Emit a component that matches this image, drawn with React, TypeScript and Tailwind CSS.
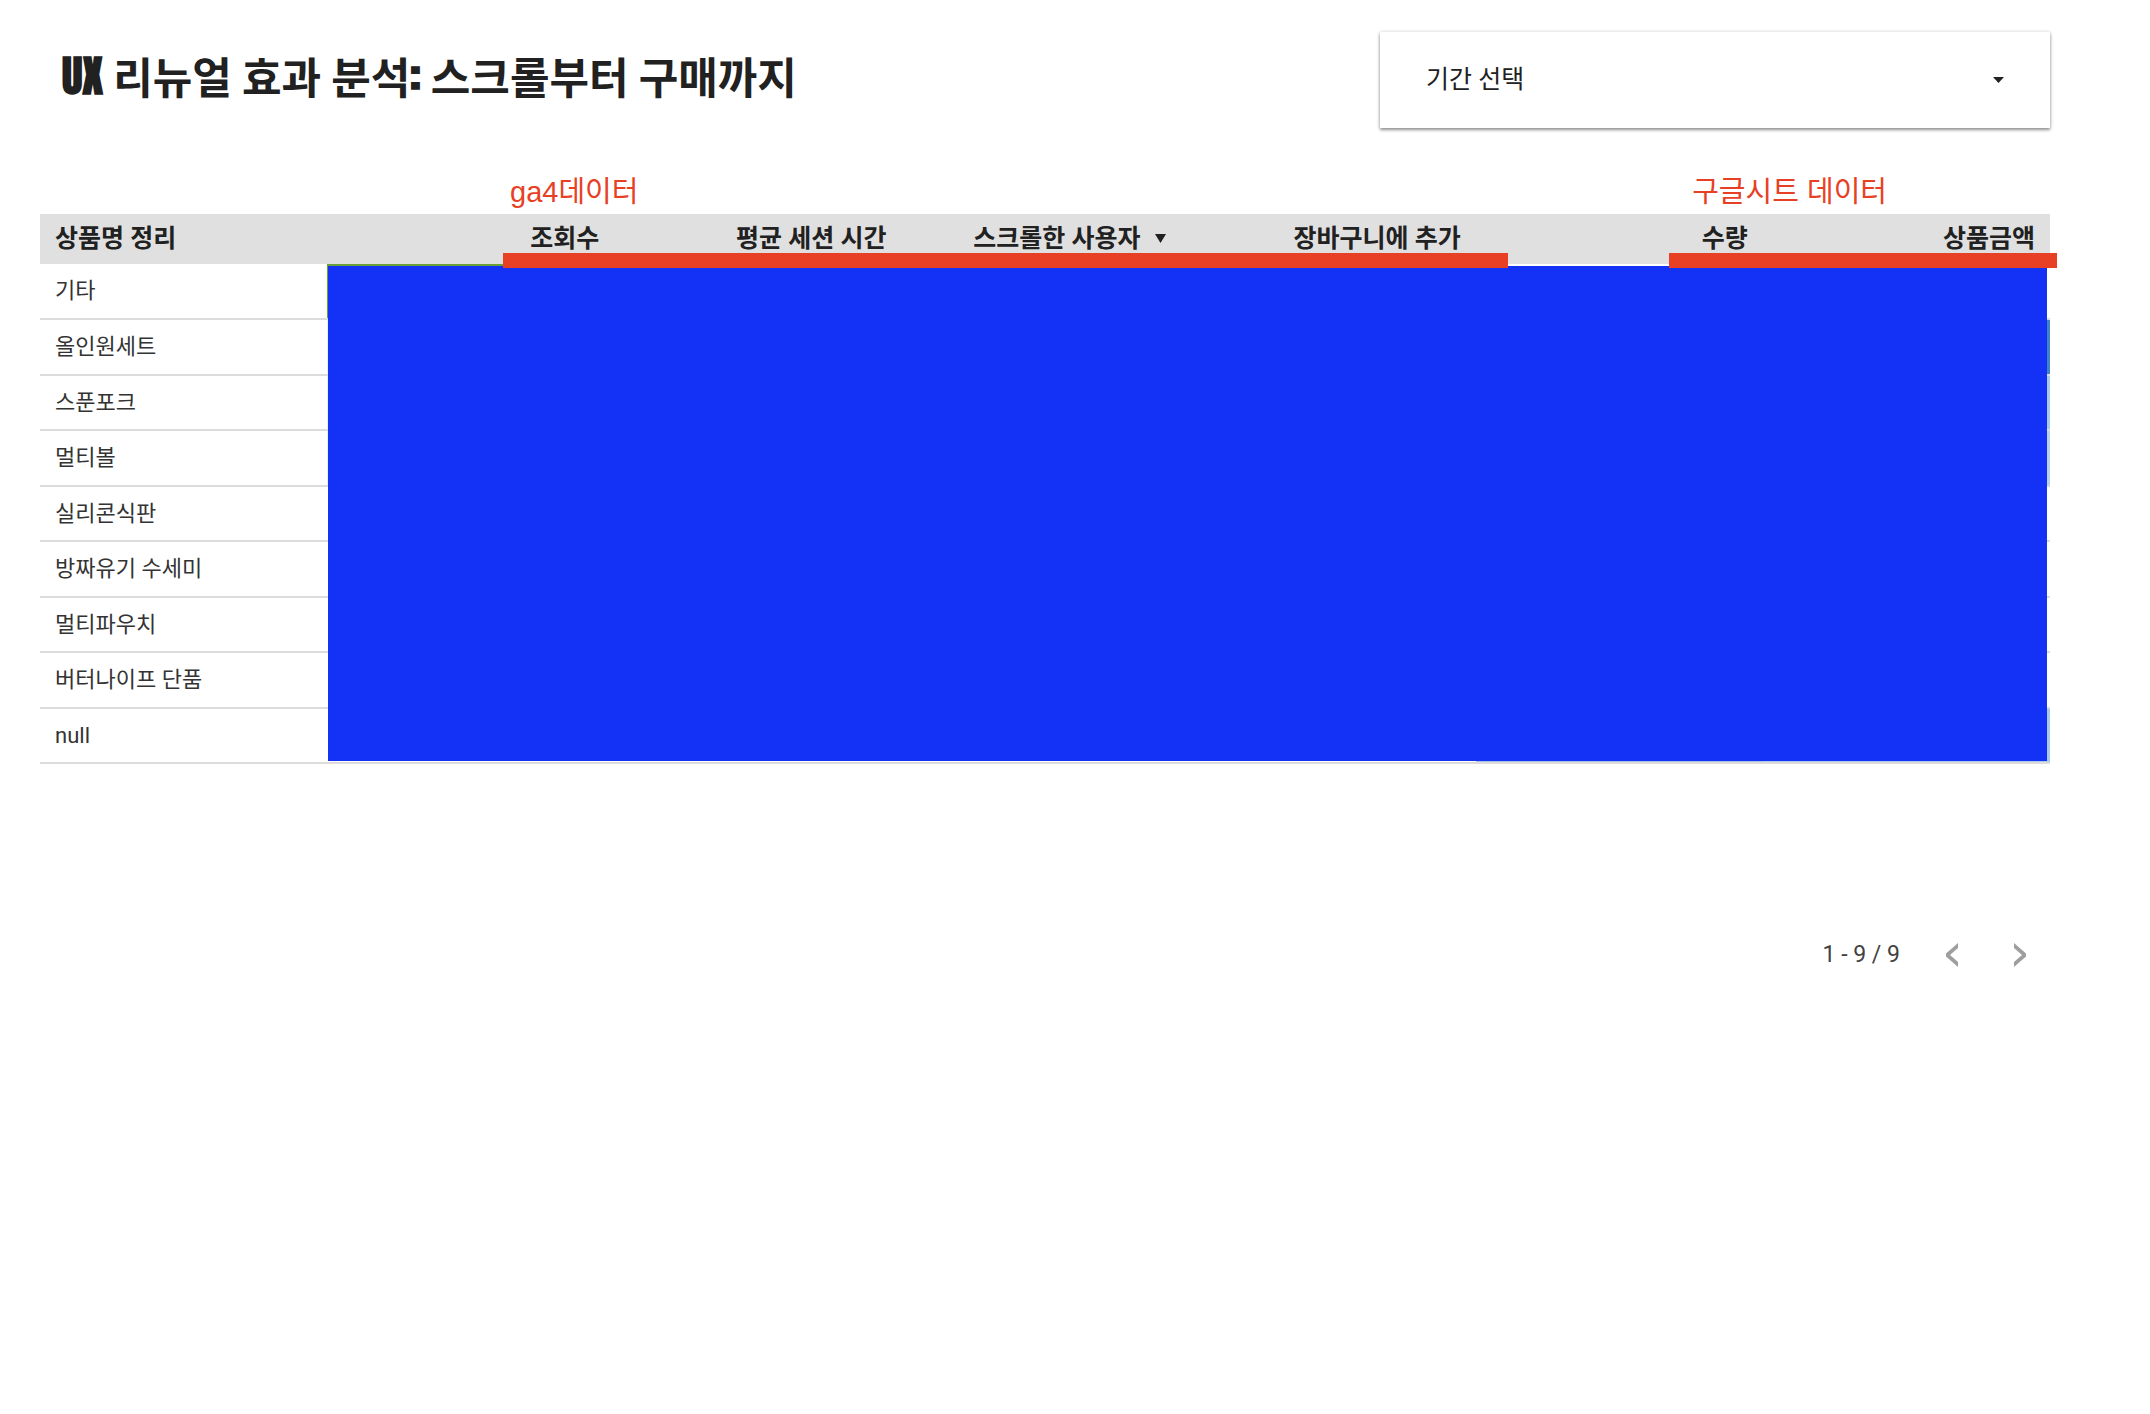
const columns = [
  "조회수",
  "평균 세션 시간",
  "스크롤한 사용자",
  "장바구니에 추가",
  "수량",
  "상품금액",
];

// heat map tint of each cell, one class per metric column
const rows = [
  { name: "기타", tints: ["bg-[#6a9f3a]", "", "", "", "", ""] },
  { name: "올인원세트", tints: ["bg-[#e0f2f1]", "", "", "", "", "bg-[#3d85c6]"] },
  { name: "스푼포크", tints: ["bg-[#e0f2f1]", "", "", "", "", "bg-[#a9cbe8]"] },
  { name: "멀티볼", tints: ["bg-[#e0f2f1]", "", "", "", "", "bg-[#b8d2ea]"] },
  { name: "실리콘식판", tints: ["", "", "", "", "", ""] },
  { name: "방짜유기 수세미", tints: ["", "", "", "", "", ""] },
  { name: "멀티파우치", tints: ["", "", "", "", "", ""] },
  { name: "버터나이프 단품", tints: ["", "", "", "", "", ""] },
  { name: "null", tints: ["", "", "", "", "bg-[#a4c2e8]", "bg-[#a9cbe8]"] },
];

function Caret({ className }: { className: string }) {
  return (
    <svg viewBox="0 0 12 8" preserveAspectRatio="none" className={className} fill="currentColor" aria-hidden="true">
      <path d="M0 0h12L6 8z" />
    </svg>
  );
}

function PageHeader() {
  return (
    <header className="flex items-start justify-between">
      <h1 className="pt-3 pl-[22px] font-[Impact,Anton,'Noto_Sans_CJK_KR',sans-serif] text-[43px] leading-[64px] font-bold whitespace-nowrap">
        UX 리뉴얼 효과 분석: 스크롤부터 구매까지
      </h1>
      <button
        type="button"
        className="flex h-24 w-1/3 items-center justify-between bg-white pr-[46px] pl-[46px] text-[25px] shadow-[0_2px_3px_rgba(0,0,0,0.4),0_0_4px_rgba(0,0,0,0.15)]"
      >
        기간 선택
        <Caret className="h-[6px] w-[11px]" />
      </button>
    </header>
  );
}

function ProductTable() {
  return (
    <div className="relative">
      <table className="w-full table-fixed border-collapse">
        <thead>
          <tr className="h-[50px] bg-[#e0e0e0] text-[25px] leading-[50px]">
            <th scope="col" className="px-[15px] py-0 text-left font-bold whitespace-nowrap">
              상품명 정리
            </th>
            {columns.map((column) => (
              <th key={column} scope="col" className="px-[15px] py-0 text-right font-bold whitespace-nowrap">
                {column}
                {column === "스크롤한 사용자" && (
                  <Caret className="mr-2 mb-1 ml-[14px] inline h-[9px] w-[11px] align-middle" />
                )}
              </th>
            ))}
          </tr>
        </thead>
        <tbody>
          {rows.map((row) => (
            <tr key={row.name} className="border-b-2 border-[#dcdcdc] odd:h-[55px] even:h-14">
              <th scope="row" className="px-[15px] py-0 text-left text-[22px] leading-8 font-normal text-[#333333]">
                {row.name}
              </th>
              {row.tints.map((tint, i) => (
                <td key={columns[i]} className={tint} />
              ))}
            </tr>
          ))}
        </tbody>
      </table>
      <div className="absolute top-[52px] right-[3px] bottom-[3px] left-[288px] bg-[#1432f5]" />
      <div className="absolute top-[39px] left-[463px] h-[15px] w-1/2 bg-[#e84024]" />
      <div className="absolute top-[39px] -right-[7px] h-[15px] w-[388px] bg-[#e84024]" />
    </div>
  );
}

function Pagination() {
  return (
    <nav className="flex items-center justify-end pr-6 text-[#9e9e9e]" aria-label="페이지">
      <span className="mr-[46px] text-[23px] leading-8 text-[#424242]">1 - 9 / 9</span>
      <button type="button" aria-label="이전" className="mr-14">
        <svg viewBox="0 0 12 24" className="h-6 w-3" fill="currentColor">
          <path d="M12 0v5L4 12l8 7v5L0 13.5v-3z" />
        </svg>
      </button>
      <button type="button" aria-label="다음">
        <svg viewBox="0 0 12 24" className="h-6 w-3" fill="currentColor">
          <path d="M0 0v5l8 7-8 7v5l12-10.5v-3z" />
        </svg>
      </button>
    </nav>
  );
}

export default function App() {
  return (
    <main className="min-h-screen bg-white pt-8 pr-[100px] pl-10 font-[Roboto,'Noto_Sans_CJK_KR',sans-serif] text-[#212121]">
      <PageHeader />
      <div className="flex justify-between pt-11 pr-[163px] pb-[2px] pl-[470px] font-['Liberation_Sans','Noto_Sans_CJK_KR',sans-serif] text-[29px] leading-10 text-[#e84024]">
        <span>ga4데이터</span>
        <span>구글시트 데이터</span>
      </div>
      <ProductTable />
      <div className="pt-[175px]">
        <Pagination />
      </div>
    </main>
  );
}
